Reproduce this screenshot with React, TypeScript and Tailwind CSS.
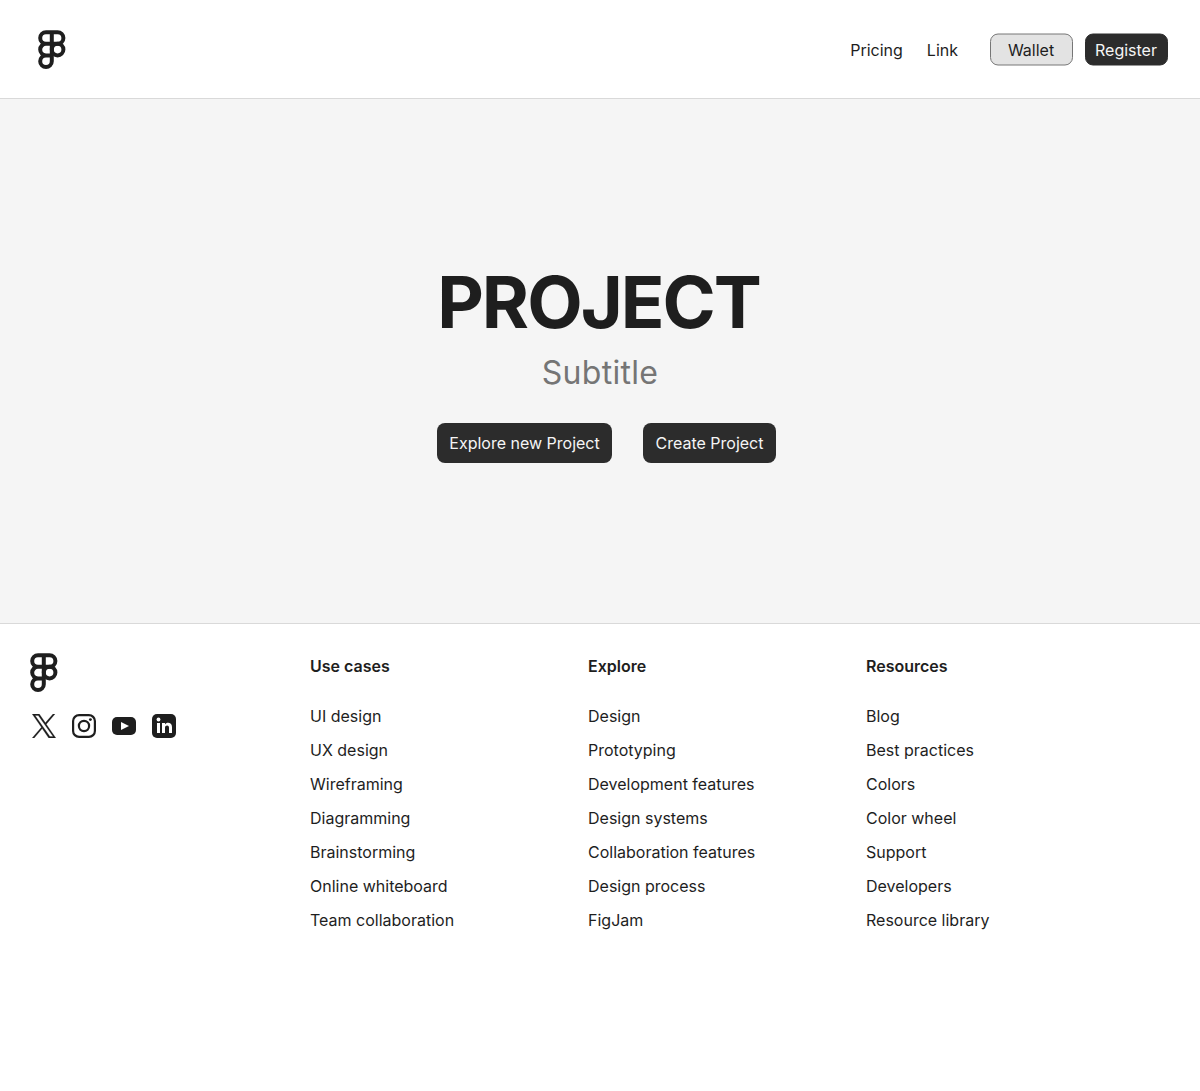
import React from "react";

function Logo({ className }: { className: string }) {
  return (
    <svg className={className} width="28" height="40" viewBox="0 0 28 40" fill="none" stroke="#1e1e1e" strokeWidth="4">
      <path d="M13.8 2.2H8a5.8 5.8 0 0 0 0 11.6H13.8zM13.8 2.2h5.8a5.8 5.8 0 0 1 0 11.6H13.8zM13.8 13.8H8a5.8 5.8 0 0 0 0 11.6H13.8zM13.8 25.4H8a5.8 5.8 0 1 0 5.8 5.8z" />
      <circle cx="19.6" cy="19.6" r="5.8" />
    </svg>
  );
}

const columns = [
  { title: "Use cases", items: ["UI design", "UX design", "Wireframing", "Diagramming", "Brainstorming", "Online whiteboard", "Team collaboration"] },
  { title: "Explore", items: ["Design", "Prototyping", "Development features", "Design systems", "Collaboration features", "Design process", "FigJam"] },
  { title: "Resources", items: ["Blog", "Best practices", "Colors", "Color wheel", "Support", "Developers", "Resource library"] },
];

export default function App() {
  return (
    <div className="flex h-[1091px] w-[1200px] flex-col bg-white font-['Inter',sans-serif] text-base text-[#1e1e1e]">
      <header className="flex h-[99px] items-center border-b border-[#d9d9d9] pr-8 pl-[38px]">
        <Logo className="mt-[2px]" />
        <nav className="mt-px ml-auto flex gap-6 leading-4">
          <a>Pricing</a>
          <a>Link</a>
        </nav>
        <div className="ml-8 flex translate-y-[0.5px] gap-3">
          <button className="h-8 w-[83px] rounded-lg border border-[#767676] bg-[#e3e3e3] pr-px leading-4">Wallet</button>
          <button className="h-8 w-[83px] rounded-lg border border-[#2c2c2c] bg-[#2c2c2c] pr-px leading-4 text-[#f5f5f5]">Register</button>
        </div>
      </header>
      <main className="flex h-[524px] flex-col items-center bg-[#f5f5f5] pt-[160px]">
        <h1 className="mr-[3px] text-[72px] leading-[86px] font-bold tracking-[-2px]">PROJECT</h1>
        <p className="mt-[9px] text-[32px] leading-[38px] tracking-[0.3px] text-[#757575]">Subtitle</p>
        <div className="mt-[31px] ml-[13px] flex gap-[31px] leading-4 text-[#f5f5f5]">
          <button className="h-10 w-[175px] rounded-lg bg-[#2c2c2c]">Explore new Project</button>
          <button className="h-10 w-[133px] rounded-lg bg-[#2c2c2c]">Create Project</button>
        </div>
      </main>
      <footer className="flex flex-1 border-t border-[#d9d9d9] pl-[30px]">
        <div className="w-[280px] pt-[29px]">
          <Logo className="" />
          <div className="mt-[21px] ml-0.5 flex gap-4">
            <svg width="24" height="24" viewBox="0 0 24 24" fill="#1e1e1e" stroke="#1e1e1e" strokeWidth="0.25"><path fillRule="evenodd" d="M14.3 10.2 23 0h-2l-7.6 8.8L7.3 0H.2l9.2 13.3L.2 24h2l8-9.4 6.5 9.4h7.1zM3.1 1.5h3.2l14.8 21h-3.2z" /></svg>
            <svg width="24" height="24" viewBox="0 0 24 24" fill="none" stroke="#1e1e1e" strokeWidth="2.2"><rect x="1.1" y="1.1" width="21.8" height="21.8" rx="6" /><circle cx="12" cy="12" r="5.1" /><circle cx="18.4" cy="5.6" r="1.44" fill="#1e1e1e" stroke="none" /></svg>
            <svg width="24" height="24" viewBox="0 0 24 24" fill="#1e1e1e"><rect y="3" width="24" height="18" rx="5" /><path fill="white" d="m9 8 8 4-8 4z" /></svg>
            <svg width="24" height="24" viewBox="0 0 24 24"><rect width="24" height="24" rx="5" fill="#1e1e1e" /><circle cx="6.5" cy="5.5" r="1.9" fill="white" /><path fill="white" d="M5 9h3v10H5zM10 9h3v1.4c1.2-2.2 7-2.6 7 2.6v6h-3v-5.2c0-3.2-4-2.7-4 0V19h-3z" /></svg>
          </div>
        </div>
        {columns.map((c) => (
          <div key={c.title} className="w-[278px] pt-[31px]">
            <h2 className="leading-[22px] font-semibold">{c.title}</h2>
            <ul className="mt-7 flex flex-col gap-3 leading-[22px]">
              {c.items.map((i) => <li key={i}>{i}</li>)}
            </ul>
          </div>
        ))}
      </footer>
    </div>
  );
}
